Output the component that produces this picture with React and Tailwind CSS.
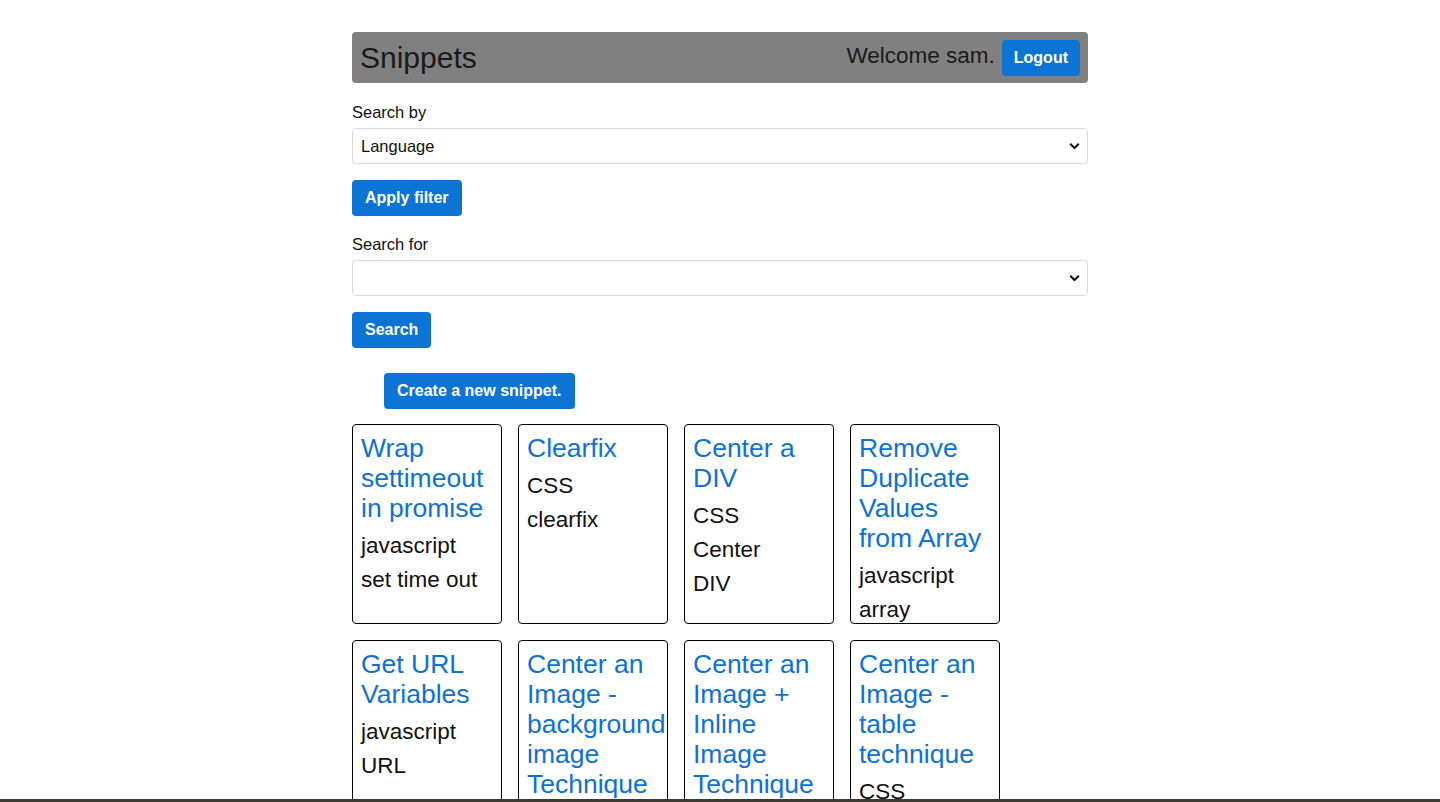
import { useState } from "react";

const snippets = [
  { title: "Wrap settimeout in promise", tags: ["javascript", "set time out"] },
  { title: "Clearfix", tags: ["CSS", "clearfix"] },
  { title: "Center a DIV", tags: ["CSS", "Center", "DIV"] },
  { title: "Remove Duplicate Values from Array", tags: ["javascript", "array"] },
  { title: "Get URL Variables", tags: ["javascript", "URL"] },
  { title: "Center an Image - background image Technique", tags: ["CSS"] },
  { title: "Center an Image + Inline Image Technique", tags: ["CSS"] },
  { title: "Center an Image - table technique", tags: ["CSS"] },
];

function Chevron() {
  return (
    <svg width="11" height="7" viewBox="0 0 11 7" className="pointer-events-none absolute right-[8px] top-1/2 -translate-y-1/2">
      <path d="M1.2 1.2l4.3 4.3 4.3-4.3" fill="none" stroke="#111" strokeWidth="2" />
    </svg>
  );
}

function Select({ value, options, onChange }) {
  return (
    <div className="relative">
      <select
        value={value}
        onChange={(e) => onChange(e.target.value)}
        className="h-[36px] w-full appearance-none rounded-[4px] border border-[#d9d9d9] bg-white pl-[8px] pr-8 text-[16.5px] text-[#111] outline-none"
      >
        {options.map((o) => (
          <option key={o} value={o}>{o}</option>
        ))}
      </select>
      <Chevron />
    </div>
  );
}

function Button({ children, className = "" }) {
  return (
    <button className={"h-[36px] rounded-[4px] bg-[#0b74d5] px-[13px] text-[16px] font-bold text-white " + className}>
      {children}
    </button>
  );
}

function Card({ title, tags }) {
  return (
    <div className="h-[200px] w-[150px] rounded-[4px] border border-black px-[8px] pt-[8px]">
      <a href="#" className="block pb-[6px] text-[26.5px] leading-[30px] text-[#0d71d6]">{title}</a>
      {tags.map((t) => (
        <p key={t} className="text-[22.5px] leading-[34px] text-[#111]">{t}</p>
      ))}
    </div>
  );
}

export default function App() {
  const [by, setBy] = useState("Language");
  const [forVal, setForVal] = useState("");
  return (
    <div className="min-h-screen bg-white font-['Liberation_Sans',Arial,sans-serif]">
      <div className="mx-auto w-[736px] pt-[32px]">
        <header className="flex h-[51px] items-center justify-between rounded-[4px] bg-[#808080] pl-[8px] pr-[8px]">
          <h1 className="text-[30px] text-[#1a1a1a]">Snippets</h1>
          <div className="flex items-center gap-[7px]">
            <span className="-mt-[4px] text-[22.5px] text-[#1a1a1a]">Welcome sam.</span>
            <button className="h-[36px] rounded-[4px] bg-[#0b74d5] px-[12px] text-[16px] font-bold text-white">Logout</button>
          </div>
        </header>

        <div className="mt-[17px]">
          <label className="mb-[4px] block text-[16.5px] leading-[24px] text-[#111]">Search by</label>
          <Select value={by} options={["Language", "Tag", "Title"]} onChange={setBy} />
          <Button className="mt-[16px] px-[12px]">Apply filter</Button>
        </div>

        <div className="mt-[16px]">
          <label className="mb-[4px] block text-[16.5px] leading-[24px] text-[#111]">Search for</label>
          <Select value={forVal} options={["", "javascript", "CSS"]} onChange={setForVal} />
          <Button className="mt-[16px]">Search</Button>
        </div>

        <div className="mt-[25px] pl-[32px]">
          <Button>Create a new snippet.</Button>
        </div>

        <div className="mt-[15px] flex flex-wrap gap-4 pb-10">
          {snippets.map((s) => (
            <Card key={s.title} {...s} />
          ))}
        </div>
      </div>
      <div className="fixed bottom-0 left-0 right-0 h-[3px] bg-[#3d3934]" />
    </div>
  );
}
